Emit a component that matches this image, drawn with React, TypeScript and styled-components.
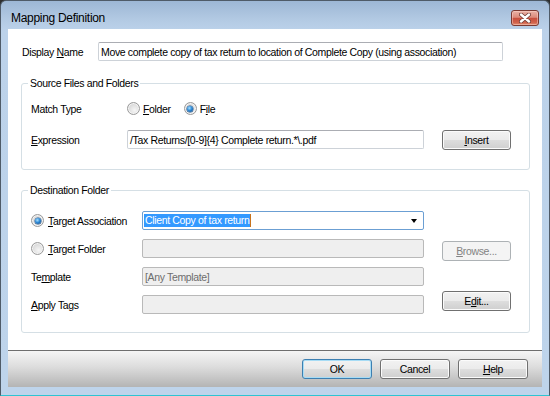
import React from 'react'
import styled, { createGlobalStyle, css } from 'styled-components'

const FONT = `'Liberation Sans', Arial, sans-serif`

const GlobalStyle = createGlobalStyle`
  html, body {
    margin: 0;
    padding: 0;
    background: #2e2e2e;
  }
  body {
    width: 550px;
    height: 396px;
    overflow: hidden;
  }
`

const Window = styled.div`
  width: 550px;
  height: 396px;
  box-sizing: border-box;
  display: flex;
  flex-direction: column;
  border: 1px solid #4f5b68;
  border-bottom-color: #2ec4d2;
  border-radius: 6px 6px 0 0;
  padding: 0 7px 8px;
  background: linear-gradient(#9db7d5 0px, #b4cbe4 20px, #bcd2ea 30px, #bed4eb 100%);
  font-family: ${FONT};
  font-size: 10.5px;
  letter-spacing: -0.35px;
  color: #000;
`

const TitleBar = styled.div`
  height: 28px;
  box-sizing: border-box;
  padding: 5px 3px 0 3px;
  display: flex;
  align-items: center;
  justify-content: space-between;
`

const Title = styled.span`
  font-size: 12px;
  letter-spacing: -0.3px;
  color: #000;
`

const CloseButton = styled.div`
  width: 28px;
  height: 16px;
  box-sizing: border-box;
  border: 1px solid #7a3a32;
  border-radius: 3px;
  background: linear-gradient(#e9b2a6 0%, #dc8b7b 45%, #c7503e 52%, #d0604a 80%, #e08a6e 100%);
  box-shadow: inset 0 0 0 1px rgba(255, 220, 210, 0.45);
  display: flex;
  align-items: center;
  justify-content: center;
`

const Client = styled.div`
  flex: 1;
  background: #fff;
  display: flex;
  flex-direction: column;
  padding: 13px 12px 0 13px;
  box-sizing: border-box;
`

const NameRow = styled.div`
  display: flex;
  align-items: center;
  height: 19px;
`

const NameLabel = styled.span`
  width: 77px;
  padding-left: 1px;
  box-sizing: border-box;
`

const Field = styled.div<{ $width?: number; $disabled?: boolean; $focus?: boolean }>`
  ${p => p.$width && css`width: ${p.$width}px;`}
  height: 19px;
  box-sizing: border-box;
  border: 1px solid #cdd2d8;
  border-top-color: #abadb3;
  border-radius: 2px;
  background: #fff;
  padding: 0 2px;
  display: flex;
  align-items: center;
  white-space: nowrap;
  overflow: hidden;
  ${p => p.$disabled && css`
    background: #efefef;
    border-color: #b9b9b9;
    color: #6d6d6d;
  `}
  ${p => p.$focus && css`
    border-color: #6b9fd3;
    padding: 0 1px;
    justify-content: space-between;
  `}
`

const Selection = styled.span`
  background: #3399ff;
  color: #fff;
  line-height: 13px;
  padding: 0 1px;
  border-right: 1px solid #c8731c;
`

const Arrow = styled.span`
  width: 0;
  height: 0;
  margin-right: 5px;
  border-left: 3.5px solid transparent;
  border-right: 3.5px solid transparent;
  border-top: 4px solid #000;
`

const Button = styled.div<{ $disabled?: boolean; $default?: boolean; $width?: number; $nudge?: number }>`
  width: ${p => p.$width ?? 69}px;
  height: 20px;
  box-sizing: border-box;
  border: 1px solid #707070;
  border-radius: 3px;
  background: linear-gradient(#f2f2f2 0%, #ebebeb 48%, #dddddd 52%, #cfcfcf 100%);
  box-shadow: inset 0 0 0 1px #fbfbfb;
  display: flex;
  align-items: center;
  justify-content: center;
  white-space: nowrap;
  ${p => p.$nudge && (p.$nudge > 0
    ? css`margin-top: ${p.$nudge * 2}px;`
    : css`margin-bottom: ${-p.$nudge * 2}px;`)}
  ${p => p.$disabled && css`
    border-color: #adb2b5;
    background: #f4f4f4;
    box-shadow: none;
    color: #838383;
  `}
  ${p => p.$default && css`
    border-color: #3c7fb1;
    box-shadow: inset 0 0 0 1px #a7dcf5;
  `}
`

const Group = styled.fieldset<{ $label: number; $field: number; $top: number; $gap: number; $padTop: number; $padBottom: number }>`
  margin: ${p => p.$top}px 0 0;
  padding: ${p => p.$padTop}px 18px ${p => p.$padBottom}px 9px;
  border: 1px solid #d5dfe5;
  border-radius: 3px;
  min-width: 0;
  display: grid;
  grid-template-columns: ${p => p.$label}px ${p => p.$field}px 87px;
  grid-auto-rows: 19px;
  row-gap: ${p => p.$gap}px;
  align-items: center;

  & > ${Button} {
    justify-self: end;
  }
`

const Legend = styled.legend`
  line-height: 14px;
  padding: 0 2px;
  margin-left: -3px;
`

const Label = styled.span`
  white-space: nowrap;
`

const Key = styled.span`
  text-decoration: underline;
  text-underline-offset: 1px;
`

const RadioRow = styled.div`
  display: flex;
  align-items: center;
  gap: 13px;
`

const RadioOption = styled.label`
  display: inline-flex;
  align-items: center;
  gap: 3px;
  white-space: nowrap;
`

const RadioText = styled.span<{ $indent?: number }>`
  margin-left: ${p => p.$indent ?? 0}px;
`

const RadioDot = styled.span<{ $checked?: boolean }>`
  position: relative;
  width: 13px;
  height: 13px;
  box-sizing: border-box;
  border-radius: 50%;
  border: 1px solid #9a9a9a;
  background: radial-gradient(circle at 60% 65%, #f6f6f6 0%, #dcdcdc 60%, #c9c9c9 100%);
  box-shadow: inset 0 0 0 1px #f4f4f4;
  ${p => p.$checked && css`
    &::after {
      content: '';
      position: absolute;
      left: 2.5px;
      top: 2.5px;
      width: 6px;
      height: 6px;
      border-radius: 50%;
      background: radial-gradient(circle at 40% 35%, #a8e0ff 0%, #2e8ad6 45%, #0d3f7a 100%);
      box-shadow: 0 0 0 0.5px #1b4f86;
    }
  `}
`

const Footer = styled.div`
  height: 37px;
  box-sizing: border-box;
  border-top: 1px solid #6e6e6e;
  background: linear-gradient(#f5f5f5 0%, #dcdcdc 45%, #b4b4b4 100%);
  display: flex;
  align-items: center;
  justify-content: flex-end;
  gap: 8px;
  padding-right: 14px;
`

const CloseIcon = () => (
  <svg width='12' height='10' viewBox='0 0 12 10'>
    <path d='M2 1.5 L10 8.5 M10 1.5 L2 8.5' stroke='#6e3b34' strokeWidth='4' strokeLinecap='round' />
    <path d='M2 1.5 L10 8.5 M10 1.5 L2 8.5' stroke='#ffffff' strokeWidth='2.4' strokeLinecap='round' />
  </svg>
)

const App = () => {
  return (
    <>
      <GlobalStyle />
      <Window>
        <TitleBar>
          <Title>Mapping Definition</Title>
          <CloseButton><CloseIcon /></CloseButton>
        </TitleBar>
        <Client>
          <NameRow>
            <NameLabel>Display <Key>N</Key>ame</NameLabel>
            <Field $width={405}>Move complete copy of tax return to location of Complete Copy (using association)</Field>
          </NameRow>

          <Group $label={96} $field={297} $top={15} $gap={12} $padTop={9} $padBottom={20}>
            <Legend>Source Files and Folders</Legend>
            <Label>Match Type</Label>
            <RadioRow>
              <RadioOption><RadioDot /><RadioText><Key>F</Key>older</RadioText></RadioOption>
              <RadioOption><RadioDot $checked /><RadioText>F<Key>i</Key>le</RadioText></RadioOption>
            </RadioRow>
            <span />
            <Label><Key>E</Key>xpression</Label>
            <Field>/Tax Returns/[0-9]{'{4}'} Complete return.*\.pdf</Field>
            <Button><span><Key>I</Key>nsert</span></Button>
          </Group>

          <Group $label={111} $field={282} $top={13} $gap={9} $padTop={14} $padBottom={18}>
            <Legend>Destination Folder</Legend>
            <RadioOption><RadioDot $checked /><RadioText $indent={1}><Key>T</Key>arget Association</RadioText></RadioOption>
            <Field $focus>
              <Selection>Client Copy of tax return</Selection>
              <Arrow />
            </Field>
            <span />
            <RadioOption><RadioDot /><RadioText $indent={1}><Key>T</Key>arget Folder</RadioText></RadioOption>
            <Field $disabled />
            <Button $disabled $nudge={2}><span><Key>B</Key>rowse...</span></Button>
            <Label>Te<Key>m</Key>plate</Label>
            <Field $disabled>[Any Template]</Field>
            <span />
            <Label><Key>A</Key>pply Tags</Label>
            <Field $disabled />
            <Button $nudge={-4}><span>E<Key>d</Key>it...</span></Button>
          </Group>
        </Client>
        <Footer>
          <Button $default $width={70}>OK</Button>
          <Button $width={70}>Cancel</Button>
          <Button $width={70}><span><Key>H</Key>elp</span></Button>
        </Footer>
      </Window>
    </>
  )
}

export default App
